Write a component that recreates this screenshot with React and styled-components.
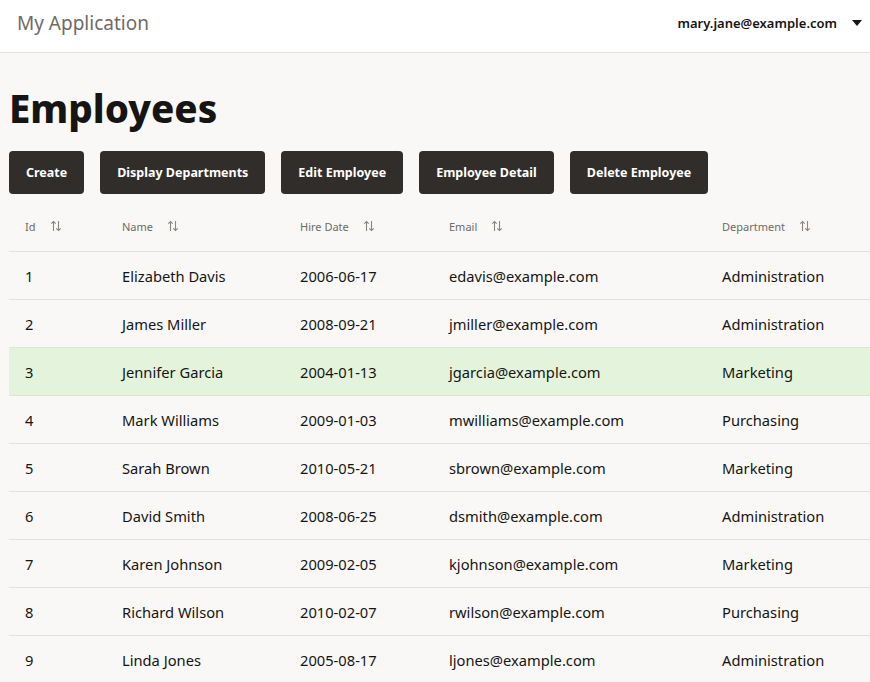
import styled, { createGlobalStyle } from "styled-components";

const GlobalStyle = createGlobalStyle`
  html, body {
    margin: 0;
    padding: 0;
    overflow: hidden;
    background: #f9f8f6;
    font-family: "Noto Sans", "Open Sans", sans-serif;
    color: #161513;
  }
`;

const employees = [
  [1, "Elizabeth Davis", "2006-06-17", "edavis@example.com", "Administration"],
  [2, "James Miller", "2008-09-21", "jmiller@example.com", "Administration"],
  [3, "Jennifer Garcia", "2004-01-13", "jgarcia@example.com", "Marketing"],
  [4, "Mark Williams", "2009-01-03", "mwilliams@example.com", "Purchasing"],
  [5, "Sarah Brown", "2010-05-21", "sbrown@example.com", "Marketing"],
  [6, "David Smith", "2008-06-25", "dsmith@example.com", "Administration"],
  [7, "Karen Johnson", "2009-02-05", "kjohnson@example.com", "Marketing"],
  [8, "Richard Wilson", "2010-02-07", "rwilson@example.com", "Purchasing"],
  [9, "Linda Jones", "2005-08-17", "ljones@example.com", "Administration"],
];

const columns = [
  { label: "Id", width: 97 },
  { label: "Name", width: 178 },
  { label: "Hire Date", width: 149 },
  { label: "Email", width: 273 },
  { label: "Department", width: 200 },
];

const SortIcon = () => (
  <svg width="12" height="12" viewBox="0 0 12 12" fill="none" stroke="#8b8680" strokeWidth="1.1">
    <path d="M3.5 11V1.5M1.3 3.7L3.5 1.5L5.7 3.7" />
    <path d="M8.5 1V10.5M6.3 8.3L8.5 10.5L10.7 8.3" />
  </svg>
);

export default function App() {
  return (
    <>
      <GlobalStyle />
      <Header>
        <AppName>My Application</AppName>
        <UserMenu>
          <UserEmail>mary.jane@example.com</UserEmail>
          <Caret />
        </UserMenu>
      </Header>
      <Main>
        <Title>Employees</Title>
        <Toolbar>
          <ActionButton>Create</ActionButton>
          <ActionButton>Display Departments</ActionButton>
          <ActionButton>Edit Employee</ActionButton>
          <ActionButton>Employee Detail</ActionButton>
          <ActionButton>Delete Employee</ActionButton>
        </Toolbar>
        <Table>
          <colgroup>
            {columns.map((c) => (
              <col key={c.label} style={{ width: c.width }} />
            ))}
          </colgroup>
          <thead>
            <tr>
              {columns.map((c) => (
                <HeadCell key={c.label}>
                  <HeadInner>
                    {c.label}
                    <SortIcon />
                  </HeadInner>
                </HeadCell>
              ))}
            </tr>
          </thead>
          <tbody>
            {employees.map((e) => (
              <Row key={e[0]} $selected={e[0] === 3}>
                {e.map((v, i) => (
                  <Cell key={i}>{v}</Cell>
                ))}
              </Row>
            ))}
          </tbody>
        </Table>
      </Main>
    </>
  );
}

const Header = styled.header`
  height: 53px;
  background: #ffffff;
  border-bottom: 1px solid #e4e2df;
  display: flex;
  align-items: center;
  justify-content: space-between;
  padding: 0 8px 7px 17px;
  box-sizing: border-box;
`;

const AppName = styled.div`
  font-size: 19px;
  color: #6f6b67;
`;

const UserMenu = styled.div`
  display: flex;
  align-items: center;
  gap: 15px;
`;

const UserEmail = styled.span`
  font-size: 13px;
  font-weight: 600;
  color: #161513;
`;

const Caret = styled.span`
  width: 0;
  height: 0;
  border-left: 5px solid transparent;
  border-right: 5px solid transparent;
  border-top: 6px solid #161513;
`;

const Main = styled.main`
  padding: 0 0 0 9px;
`;

const Title = styled.h1`
  margin: 32px 0 20px;
  font-size: 38.5px;
  line-height: 46px;
  font-weight: 800;
  color: #161513;
`;

const Toolbar = styled.div`
  display: flex;
  gap: 16px;
  margin-bottom: 7px;
`;

const ActionButton = styled.button`
  height: 43px;
  padding: 0 17px;
  border: none;
  border-radius: 4px;
  background: #312d2a;
  color: #ffffff;
  font-family: inherit;
  font-size: 12.5px;
  font-weight: 700;
  cursor: pointer;
`;

const Table = styled.table`
  border-collapse: collapse;
  table-layout: fixed;
  width: 897px;
`;

const HeadCell = styled.th`
  height: 50px;
  padding: 0 16px;
  text-align: left;
  font-size: 11px;
  font-weight: 400;
  color: #6f6b67;
  border-bottom: 1px solid #e4e2df;
`;

const HeadInner = styled.span`
  display: inline-flex;
  align-items: center;
  gap: 14px;
`;

const Row = styled.tr`
  background: ${(p) => (p.$selected ? "#e3f3dc" : "transparent")};
  border-bottom: 1px solid ${(p) => (p.$selected ? "#d7e6d0" : "#e4e2df")};
`;

const Cell = styled.td`
  height: 47px;
  padding: 0 16px;
  font-size: 14.7px;
  color: #161513;
  white-space: nowrap;
`;
